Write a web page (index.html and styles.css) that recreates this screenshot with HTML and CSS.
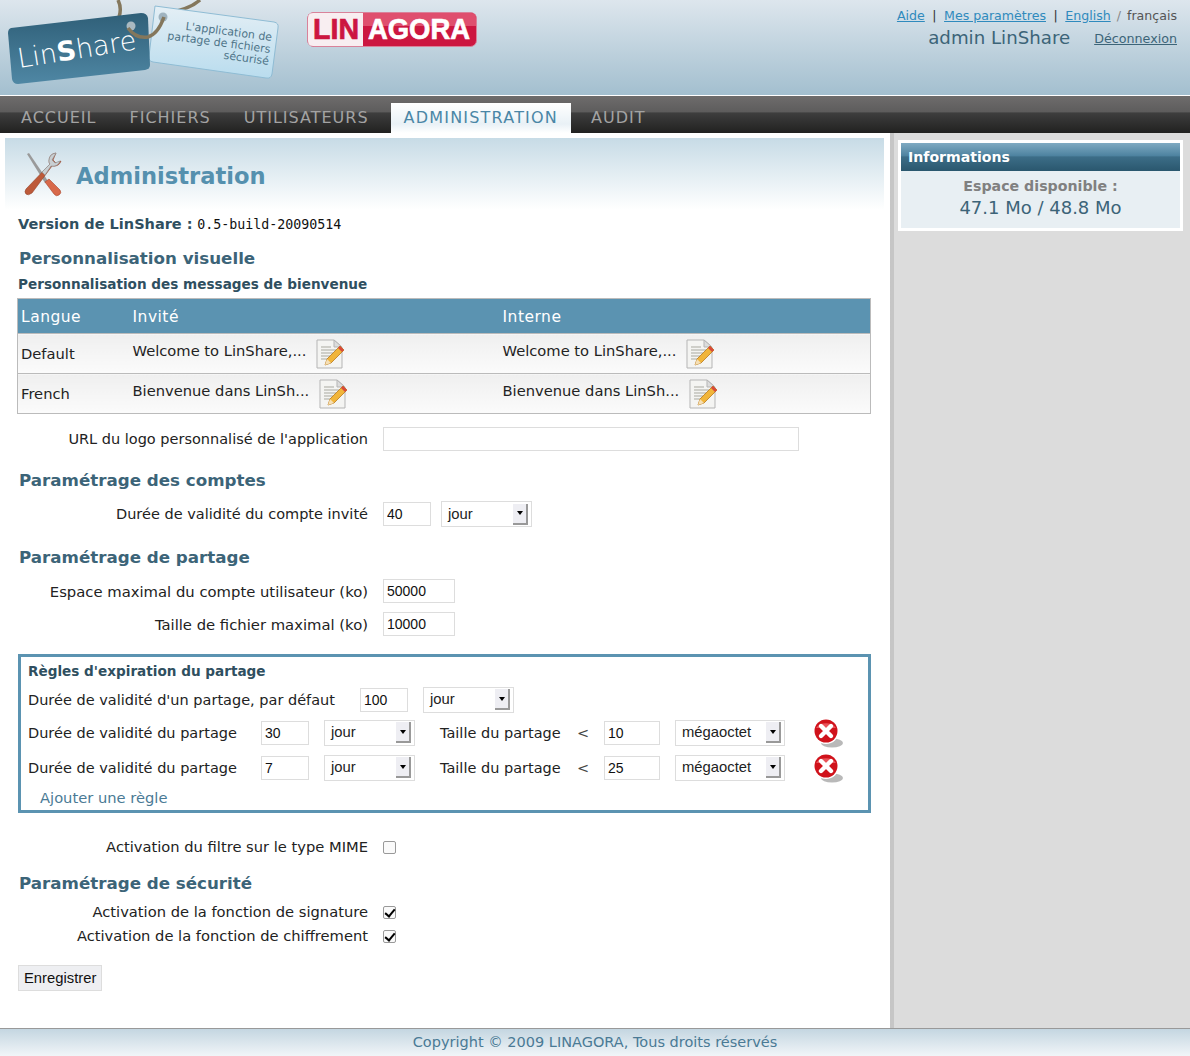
FILE: index.html
```html
<!DOCTYPE html>
<html lang="fr">
<head>
    <meta charset="UTF-8">
    <title>LinShare - Administration</title>
    <link rel="stylesheet" href="styles.css">
</head>
<body>

    <svg class="sprites" width="0" height="0">
        <symbol id="edit-icon" viewBox="0 0 30 30">
            <path d="M2 1h17l8 7v21H2z" fill="#f4f4f2" stroke="#b5b5b5"/>
            <path d="M19 1l8 7h-8z" fill="#dcdcdc" stroke="#b5b5b5"/>
            <path d="M6 8h10M6 11h15M6 14h12M6 17h9M6 20h7" stroke="#a9a9a0" fill="none"/>
            <path d="M10 26l2-6L25 7l4 4-13 13z" fill="#f1b53a" stroke="#b9791c" stroke-width=".8"/>
            <path d="M25 7l4 4-2 2-4-4z" fill="#d8493a"/>
            <path d="M10 26l2-6 4 4z" fill="#f5dfb5"/>
        </symbol>
        <symbol id="delete-icon" viewBox="0 0 32 32">
            <ellipse cx="20" cy="25" rx="11" ry="4.5" fill="#b9b9b9"/>
            <circle cx="14" cy="13" r="13" fill="#fff"/>
            <circle cx="14" cy="13" r="11.5" fill="#d0121b"/>
            <path d="M4 10a11 8 0 0 1 20 0z" fill="#e9545a"/>
            <path d="M9 8l10 10M19 8L9 18" stroke="#fff" stroke-width="4.4" stroke-linecap="round"/>
        </symbol>
    </svg>

    <header class="top-header">
        <svg class="logo-linshare" width="285" height="95" viewBox="0 0 285 95">
            <defs>
                <linearGradient id="blueTag" x1="0" y1="0" x2="0" y2="1">
                    <stop offset="0" stop-color="#2f5f78"/>
                    <stop offset="1" stop-color="#4f87a4"/>
                </linearGradient>
                <linearGradient id="lightTag" x1="0" y1="0" x2="0" y2="1">
                    <stop offset="0" stop-color="#e4eff5"/>
                    <stop offset="1" stop-color="#b9dcee"/>
                </linearGradient>
            </defs>
            <path d="M118 0q4 8 1 17M200 0q-10 9-32 13" stroke="#84775c" stroke-width="3.5" fill="none"/>
            <path d="M155 6l119 16q5 1 4 6l-6 46q-1 5-6 4L153 62q-5-1-4-6l6-50z" fill="url(#lightTag)" stroke="#8fbcd4"/>
            <circle cx="163" cy="17" r="4.5" fill="#9fb3bf"/>
            <path d="M11 28L141 13q6 0 7 5l2 47q0 4-5 5L18 84q-5 0-6-5L8 33q0-4 3-5z" fill="url(#blueTag)"/>
            <circle cx="131" cy="26" r="4.5" fill="#a9b9c1"/>
            <path d="M128 28q8 11 20 9q10-3 16-20" stroke="#84775c" stroke-width="3.5" fill="none"/>
            <text class="logo-name" transform="translate(19 68) rotate(-9)">Lin<tspan class="logo-bold">S</tspan>hare</text>
            <g class="logo-tagline" transform="rotate(7.5 225 50)">
                <text x="270" y="35" text-anchor="end">L'application de</text>
                <text x="270" y="47" text-anchor="end">partage de fichiers</text>
                <text x="270" y="59" text-anchor="end">sécurisé</text>
            </g>
        </svg>
        <svg class="logo-linagora" width="170" height="35" viewBox="0 0 170 35">
            <rect x=".5" y=".5" width="169" height="34" rx="6" fill="#cc1640" stroke="#d9829a"/>
            <path d="M6 1h50v33H6q-5 0-5-5V6q0-5 5-5z" fill="#f8eef1"/>
            <path d="M56 1h108q5 0 5 5v8H56z" fill="#df4f6e"/>
            <text class="linagora-lin" x="6" y="27" textLength="46" lengthAdjust="spacingAndGlyphs">LIN</text>
            <text class="linagora-agora" x="61" y="27" textLength="102" lengthAdjust="spacingAndGlyphs">AGORA</text>
        </svg>
        <div class="user-links">
            <div class="user-links-top">
                <a href="#">Aide</a><span class="sep">|</span><a href="#">Mes paramètres</a><span class="sep">|</span><a href="#">English</a><span class="slash">/</span><span>français</span>
            </div>
            <div class="user-links-name">
                <span class="user-name">admin LinShare</span>
                <a href="#" class="logout">Déconnexion</a>
            </div>
        </div>
    </header>

    <nav class="main-nav">
        <a href="#">ACCUEIL</a>
        <a href="#">FICHIERS</a>
        <a href="#">UTILISATEURS</a>
        <a href="#" class="active">ADMINISTRATION</a>
        <a href="#">AUDIT</a>
    </nav>

    <div class="page">
        <main class="content">
            <div class="title-band">
                <svg width="40" height="46" viewBox="0 0 40 46">
                    <path d="M4 3l2-1 19 28-3 2z" fill="#9a9a9a"/>
                    <path d="M22 31l4-3 11 11q2 3-1 5t-5-1z" fill="#d8694a" stroke="#a8452c" stroke-width=".6"/>
                    <path d="M33 2q-7 1-7 8 0 2 1 3L3 38q-2 3 0 5t6-1l20-27q7 1 9-5l-5 2-3-3z" fill="#bd5a3a" stroke="#94432a" stroke-width=".6"/>
                    <path d="M33 2q-7 1-7 8 0 2 1 3l-8 8 3 3 6-9q7 1 9-5l-5 2-3-3z" fill="#c9cfd2" stroke="#8c9599" stroke-width=".6"/>
                </svg>
                <h1>Administration</h1>
            </div>

            <form class="admin-form">
                <p class="version"><strong>Version de LinShare :</strong> <code>0.5-build-20090514</code></p>

                <h2 class="first">Personnalisation visuelle</h2>
                <h3>Personnalisation des messages de bienvenue</h3>

                <table class="welcome-table">
                    <thead>
                        <tr><th class="col-lang">Langue</th><th class="col-msg">Invité</th><th>Interne</th></tr>
                    </thead>
                    <tbody>
                        <tr>
                            <td>Default</td>
                            <td><span class="msg">Welcome to LinShare,...</span><svg class="edit" width="30" height="30"><use href="#edit-icon"/></svg></td>
                            <td><span class="msg">Welcome to LinShare,...</span><svg class="edit" width="30" height="30"><use href="#edit-icon"/></svg></td>
                        </tr>
                        <tr>
                            <td>French</td>
                            <td><span class="msg">Bienvenue dans LinSh...</span><svg class="edit" width="30" height="30"><use href="#edit-icon"/></svg></td>
                            <td><span class="msg">Bienvenue dans LinSh...</span><svg class="edit" width="30" height="30"><use href="#edit-icon"/></svg></td>
                        </tr>
                    </tbody>
                </table>

                <div class="row row-url">
                    <label>URL du logo personnalisé de l'application</label>
                    <input type="text" class="input-url">
                </div>

                <h2>Paramétrage des comptes</h2>
                <div class="row row-account">
                    <label>Durée de validité du compte invité</label>
                    <input type="text" class="input-small" value="40">
                    <div class="select select-jour"><span>jour</span><i class="select-arrow"></i></div>
                </div>

                <h2 class="section-share">Paramétrage de partage</h2>
                <div class="row row-tight">
                    <label>Espace maximal du compte utilisateur (ko)</label>
                    <input type="text" class="input-medium" value="50000">
                </div>
                <div class="row row-tight">
                    <label>Taille de fichier maximal (ko)</label>
                    <input type="text" class="input-medium" value="10000">
                </div>

                <fieldset class="expiration">
                    <h3>Règles d'expiration du partage</h3>
                    <div class="rule rule-default">
                        <span class="rule-label-default">Durée de validité d'un partage, par défaut</span>
                        <input type="text" class="input-small" value="100">
                        <div class="select select-jour"><span>jour</span><i class="select-arrow"></i></div>
                    </div>
                    <div class="rule">
                        <span class="rule-label">Durée de validité du partage</span>
                        <input type="text" class="input-small" value="30">
                        <div class="select select-jour"><span>jour</span><i class="select-arrow"></i></div>
                        <span class="rule-size">Taille du partage</span>
                        <span class="rule-lt">&lt;</span>
                        <input type="text" class="input-size" value="10">
                        <div class="select select-unit"><span>mégaoctet</span><i class="select-arrow"></i></div>
                        <svg class="delete" width="32" height="32"><use href="#delete-icon"/></svg>
                    </div>
                    <div class="rule">
                        <span class="rule-label">Durée de validité du partage</span>
                        <input type="text" class="input-small" value="7">
                        <div class="select select-jour"><span>jour</span><i class="select-arrow"></i></div>
                        <span class="rule-size">Taille du partage</span>
                        <span class="rule-lt">&lt;</span>
                        <input type="text" class="input-size" value="25">
                        <div class="select select-unit"><span>mégaoctet</span><i class="select-arrow"></i></div>
                        <svg class="delete" width="32" height="32"><use href="#delete-icon"/></svg>
                    </div>
                    <a href="#" class="add-rule">Ajouter une règle</a>
                </fieldset>

                <div class="row row-mime">
                    <label>Activation du filtre sur le type MIME</label>
                    <input type="checkbox" class="check">
                </div>

                <h2 class="section-security">Paramétrage de sécurité</h2>
                <div class="row row-check">
                    <label>Activation de la fonction de signature</label>
                    <input type="checkbox" class="check" checked>
                </div>
                <div class="row row-check">
                    <label>Activation de la fonction de chiffrement</label>
                    <input type="checkbox" class="check" checked>
                </div>

                <button type="button" class="save">Enregistrer</button>
            </form>
        </main>

        <aside class="sidebar">
            <div class="info-box">
                <div class="info-title">Informations</div>
                <div class="info-body">
                    <div class="info-label">Espace disponible :</div>
                    <div class="info-value">47.1 Mo / 48.8 Mo</div>
                </div>
            </div>
        </aside>
    </div>

    <footer class="bottom-footer">Copyright © 2009 LINAGORA, Tous droits réservés</footer>

</body>
</html>
```

FILE: styles.css
```css
* {
    box-sizing: border-box;
}

body {
    font-family: 'DejaVu Sans', sans-serif;
    font-size: 14px;
    background-color: #fff;
    color: #222;
    margin: 0;
    padding: 0;
}

.sprites {
    display: block;
    height: 0;
}

/* Header */
.top-header {
    display: flex;
    height: 96px;
    background: linear-gradient(#dde6ed, #a3bfcf);
    border-bottom: 1px solid #fff;
    overflow: hidden;
}

.logo-name {
    font-family: 'DejaVu Sans', sans-serif;
    font-size: 27px;
    font-weight: 200;
    fill: #fff;
}

.logo-bold {
    font-weight: bold;
}

.logo-tagline {
    font-family: 'DejaVu Sans', sans-serif;
    font-size: 11px;
    fill: #4e7488;
}

.logo-linagora {
    margin: 12px 0 0 22px;
}

.linagora-lin, .linagora-agora {
    font-family: 'Liberation Sans', sans-serif;
    font-size: 29px;
    font-weight: bold;
    stroke-width: .7;
}

.linagora-lin {
    fill: #cc1640;
    stroke: #cc1640;
}

.linagora-agora {
    fill: #fff;
    stroke: #fff;
}

.user-links {
    margin-left: auto;
    padding: 8px 13px 0 0;
    text-align: right;
}

.user-links-top {
    font-size: 12.6px;
    line-height: 15px;
    color: #555;
}

.user-links-top a {
    color: #2f8abd;
}

.sep {
    margin: 0 7.5px;
    color: #333;
}

.slash {
    margin: 0 6px;
    color: #888;
}

.user-links-name {
    display: flex;
    justify-content: flex-end;
    align-items: center;
    margin-top: 4px;
}

.user-name {
    font-size: 18.2px;
    color: #3c6478;
}

.logout {
    font-size: 12.7px;
    margin: 1px 0 0 24px;
    color: #3c6478;
}

/* Navigation */
.main-nav {
    display: flex;
    align-items: flex-end;
    height: 37px;
    padding-left: 8px;
    background: linear-gradient(#6e6c6c, #5d5c5c 44%, #3e3e3e 45%, #212120);
}

.main-nav a {
    display: block;
    height: 30px;
    line-height: 30px;
    padding: 0 13px;
    margin-right: 7px;
    font-size: 16px;
    letter-spacing: 1px;
    color: #a3a3a3;
    text-decoration: none;
}

.main-nav a.active {
    margin-left: 2px;
    background: linear-gradient(#fff, #e9f1f6 70%, #fff);
    color: #4a86a6;
    letter-spacing: 1.2px;
}

/* Page columns */
.page {
    display: flex;
    height: 895px;
}

.content {
    width: 894px;
    padding: 5px 0 0 5px;
    border-right: 4px solid #a4a4a4;
    border-image: linear-gradient(to right, #8a8a8a, #c6c6c6) 1;
    background-color: #fff;
}

.sidebar {
    flex: 1;
    padding: 7px 7px 0 4px;
    background-color: #dcdcdc;
}

/* Title */
.title-band {
    display: flex;
    align-items: center;
    width: 879px;
    height: 72px;
    padding: 0 0 0 18px;
    background: linear-gradient(#c7dbe6, #fff);
}

.title-band h1 {
    margin: 4px 0 0 13px;
    font-size: 22.6px;
    font-weight: bold;
    color: #5590ae;
}

/* Form */
.admin-form {
    padding: 0 0 0 13px;
    width: 866px;
}

.version {
    margin: 5px 0 0;
    line-height: 18px;
    font-size: 14.5px;
    color: #2f4f60;
}

.version code {
    font-family: 'DejaVu Sans Mono', monospace;
    font-size: 13.3px;
    color: #111;
}

h2 {
    margin: 19px 0 0 1px;
    font-size: 16.7px;
    line-height: 20px;
    font-weight: bold;
    color: #3c6478;
}

h2.first {
    margin-top: 14px;
}

h3 {
    margin: 7px 0 0;
    font-size: 13.6px;
    line-height: 18px;
    font-weight: bold;
    color: #2f4f60;
}

.welcome-table {
    width: 854px;
    margin: 5px 0 0 -1px;
    border-collapse: collapse;
    border: 1px solid #bbb;
    table-layout: fixed;
}

.welcome-table th {
    height: 35px;
    padding: 2px 3px 0;
    background-color: #5b93b1;
    color: #fff;
    font-size: 15.5px;
    letter-spacing: .5px;
    font-weight: normal;
    text-align: left;
}

.col-lang {
    width: 112px;
}

.col-msg {
    width: 370px;
}

.welcome-table td {
    height: 40px;
    padding: 0 3px;
    border-top: 1px solid #bbb;
    background: linear-gradient(#efefef, #fbfbfb);
    font-size: 14.7px;
}

.msg {
    vertical-align: 2px;
}

.edit {
    margin-left: 9px;
    vertical-align: middle;
}

.row {
    display: flex;
    align-items: center;
    margin-top: 8px;
}

.row label {
    width: 350px;
    margin-right: 15px;
    text-align: right;
    font-size: 14.5px;
}

.row-url {
    margin-top: 13px;
}

.row-account {
    margin-top: 11px;
}

.section-share {
    margin-top: 20px;
}

.row-tight {
    margin-top: 9px;
}

.section-share + .row-tight {
    margin-top: 12px;
}

.row-tight label {
    font-size: 14.8px;
}

input[type="text"] {
    height: 24px;
    padding: 0 3px;
    border: 1px solid #ddd;
    font-family: 'Liberation Sans', sans-serif;
    font-size: 14px;
    color: #111;
}

.input-url {
    width: 416px;
}

.input-small {
    width: 48px;
}

.input-medium {
    width: 72px;
}

.input-size {
    width: 56px;
}

.select {
    display: flex;
    align-items: center;
    justify-content: space-between;
    height: 26px;
    margin-left: 10px;
    padding: 0 3px 0 6px;
    border: 1px solid #ddd;
    font-family: 'Liberation Sans', sans-serif;
    font-size: 14.8px;
}

.select span {
    margin-top: -1px;
}

.rule .select {
    margin-left: 15px;
}

.select-jour {
    width: 91px;
}

.select-unit {
    width: 110px;
}

.select-arrow {
    display: flex;
    align-items: center;
    justify-content: center;
    width: 15px;
    height: 21px;
    background-color: #eeeef3;
    border-right: 2px solid #999;
    border-bottom: 2px solid #999;
}

.select-arrow::after {
    content: "";
    border: 3px solid transparent;
    border-top: 4px solid #000;
    border-bottom: 0;
}

.expiration {
    height: 159px;
    width: 853px;
    margin: 18px 0 0;
    padding: 5px 7px 0;
    border: 3px solid #5b93b1;
}

.expiration h3 {
    margin: 0;
}

.rule {
    display: flex;
    align-items: center;
    height: 27px;
    margin-top: 8px;
    font-size: 14.5px;
}

.rule-default {
    margin-top: 6px;
}

.rule-default + .rule {
    margin-top: 6px;
}

.rule-label-default {
    width: 332px;
}

.rule-label {
    width: 233px;
}

.rule-size {
    width: 137px;
    margin-left: 25px;
}

.rule-lt {
    width: 27px;
    color: #444;
}

.delete {
    flex-shrink: 0;
    margin: 3px 0 0 27px;
}

.add-rule {
    display: block;
    margin: 8px 0 0 12px;
    font-size: 14.7px;
    color: #4a7a95;
    text-decoration: none;
}

.check {
    appearance: none;
    position: relative;
    width: 13px;
    height: 13px;
    margin: 2px 0 0;
    border: 1px solid #999;
    border-radius: 2px;
    background-color: #fafafa;
}

.check:checked::after {
    content: "";
    position: absolute;
    left: 3px;
    top: 0;
    width: 4px;
    height: 8px;
    border-right: 2px solid #000;
    border-bottom: 2px solid #000;
    transform: rotate(40deg);
}

.row-mime {
    margin-top: 25px;
}

.row-mime label, .row-check label {
    font-size: 14.7px;
}

.section-security {
    margin-top: 18px;
}

.row-check {
    margin-top: 7px;
}

.section-security + .row-check {
    margin-top: 10px;
}

.save {
    display: block;
    height: 26px;
    margin-top: 21px;
    padding: 0 5px;
    border: 1px solid #ddd;
    background-color: #eeeff2;
    font-family: 'Liberation Sans', sans-serif;
    font-size: 14.8px;
    color: #111;
}

/* Sidebar box */
.info-box {
    border: 3px solid #fff;
    height: 91px;
}

.info-title {
    height: 28px;
    line-height: 29px;
    padding-left: 7px;
    background: linear-gradient(#7faac2, #4e83a0 45%, #3c6d87 50%, #2a576e);
    color: #fff;
    font-size: 14.1px;
    font-weight: bold;
}

.info-body {
    height: 57px;
    padding-top: 7px;
    background-color: #e8eff3;
    text-align: center;
}

.info-label {
    font-size: 14.2px;
    font-weight: bold;
    color: #808080;
}

.info-value {
    margin-top: 3px;
    font-size: 18px;
    color: #3c6478;
}

/* Footer */
.bottom-footer {
    height: 28px;
    line-height: 26px;
    border-top: 1px solid #999;
    background: linear-gradient(#c4d6e1, #f1f5f8);
    color: #4a7a95;
    font-size: 14.5px;
    text-align: center;
}
```
